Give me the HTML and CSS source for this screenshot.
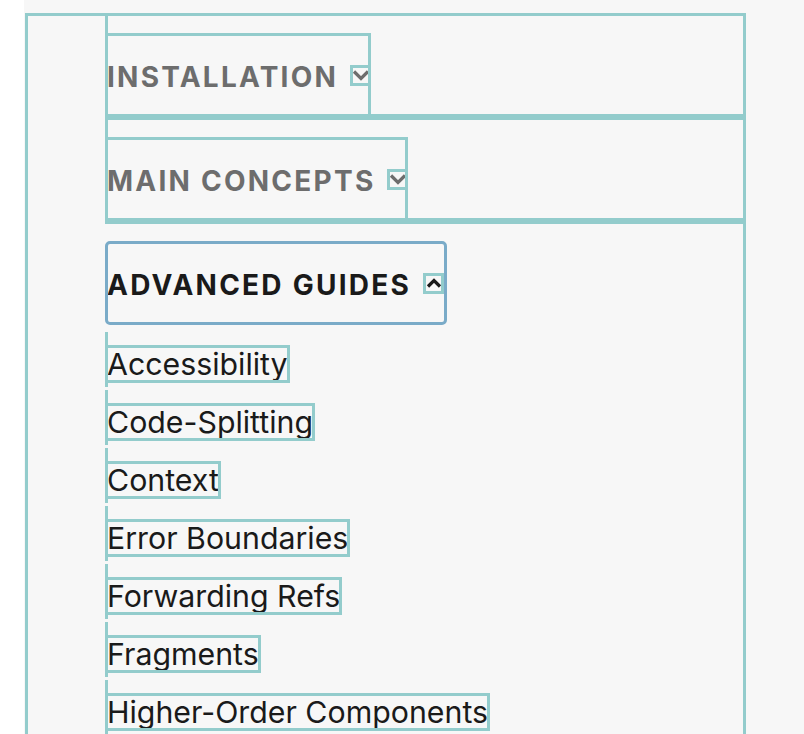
FILE: index.html
```html
<!DOCTYPE html>
<html lang="en">
<head>
<meta charset="utf-8">
<title>Docs navigation</title>
<link rel="stylesheet" href="styles.css">
</head>
<body>
<div class="sidebar">
  <nav class="frame">
    <div class="section">
      <div class="section-head">
        <button class="section-btn" type="button">
          <span class="label">Installation</span>
          <span class="chev"><svg viewBox="0 0 20 20" width="20" height="20"><path d="M3 6.5 L10 13.5 L17 6.5" fill="none" stroke="currentColor" stroke-width="3.2"/></svg></span>
        </button>
      </div>
    </div>
    <div class="section">
      <div class="section-head">
        <button class="section-btn" type="button">
          <span class="label">Main Concepts</span>
          <span class="chev"><svg viewBox="0 0 20 20" width="20" height="20"><path d="M3 6.5 L10 13.5 L17 6.5" fill="none" stroke="currentColor" stroke-width="3.2"/></svg></span>
        </button>
      </div>
    </div>
    <div class="section">
      <div class="section-head is-flat">
        <button class="section-btn is-open" type="button">
          <span class="label">Advanced Guides</span>
          <span class="chev"><svg viewBox="0 0 20 20" width="20" height="20"><path d="M4 13.5 L10 7.5 L16 13.5" fill="none" stroke="currentColor" stroke-width="3.2"/></svg></span>
        </button>
      </div>
      <ul class="links">
        <li class="item"><a class="link" href="#">Accessibility</a></li>
        <li class="item"><a class="link" href="#">Code-Splitting</a></li>
        <li class="item"><a class="link" href="#">Context</a></li>
        <li class="item"><a class="link" href="#">Error Boundaries</a></li>
        <li class="item"><a class="link" href="#">Forwarding Refs</a></li>
        <li class="item"><a class="link" href="#">Fragments</a></li>
        <li class="item"><a class="link" href="#">Higher-Order Components</a></li>
      </ul>
    </div>
  </nav>
</div>
</body>
</html>
```
FILE: styles.css
```css
html, body {
  margin: 0;
  height: 100%;
  overflow: hidden;
}

body {
  background: #ffffff;
  font-family: Inter, "Noto Sans", "Liberation Sans", sans-serif;
}

.sidebar {
  margin-left: 24px;
  height: 100vh;
  box-sizing: border-box;
  padding-top: 13px;
  background: #f7f7f7;
}

.frame {
  display: block;
  margin-left: 1px;
  width: 721px;
  min-height: 900px;
  box-sizing: border-box;
  padding-left: 80px;
  outline: 3px solid #93cccc;
  outline-offset: -3px;
}

.section-head {
  padding-top: 20px;
  outline: 3px solid #93cccc;
  outline-offset: -3px;
}

.section-head.is-flat {
  outline: none;
  box-shadow: inset 0 3px 0 #93cccc;
}

.section-btn {
  display: flex;
  align-items: center;
  width: fit-content;
  height: 84px;
  margin: 0;
  padding: 3px 0 0 2px;
  box-sizing: border-box;
  border: 0;
  background: transparent;
  color: #6d6d6d;
  font-family: Inter, "Noto Sans", "Liberation Sans", sans-serif;
  font-size: 28px;
  font-weight: 700;
  line-height: 1;
  letter-spacing: 0.08em;
  text-transform: uppercase;
  outline: 3px solid #93cccc;
  outline-offset: -3px;
  cursor: pointer;
}

.section-btn.is-open {
  color: #1a1a1a;
  outline-color: #7aabc8;
  border-radius: 5px;
  padding-right: 3px;
}

.chev {
  display: flex;
  align-items: center;
  justify-content: center;
  width: 21px;
  height: 21px;
  margin-top: -3px;
  margin-left: 12px;
  outline: 3px solid #93cccc;
  outline-offset: -3px;
}

.chev svg {
  display: block;
}

.links {
  list-style: none;
  margin: 0;
  padding: 4px 0 0;
}

.item {
  height: 55px;
  margin-top: 3px;
  box-sizing: border-box;
  padding-top: 13px;
  box-shadow: inset 3px 0 0 #93cccc;
}

.link {
  display: inline-block;
  vertical-align: top;
  height: 38px;
  padding: 0 2px;
  color: #1a1a1a;
  font-size: 30.3px;
  line-height: 38px;
  text-decoration: none;
  outline: 3px solid #93cccc;
  outline-offset: -3px;
}
```
